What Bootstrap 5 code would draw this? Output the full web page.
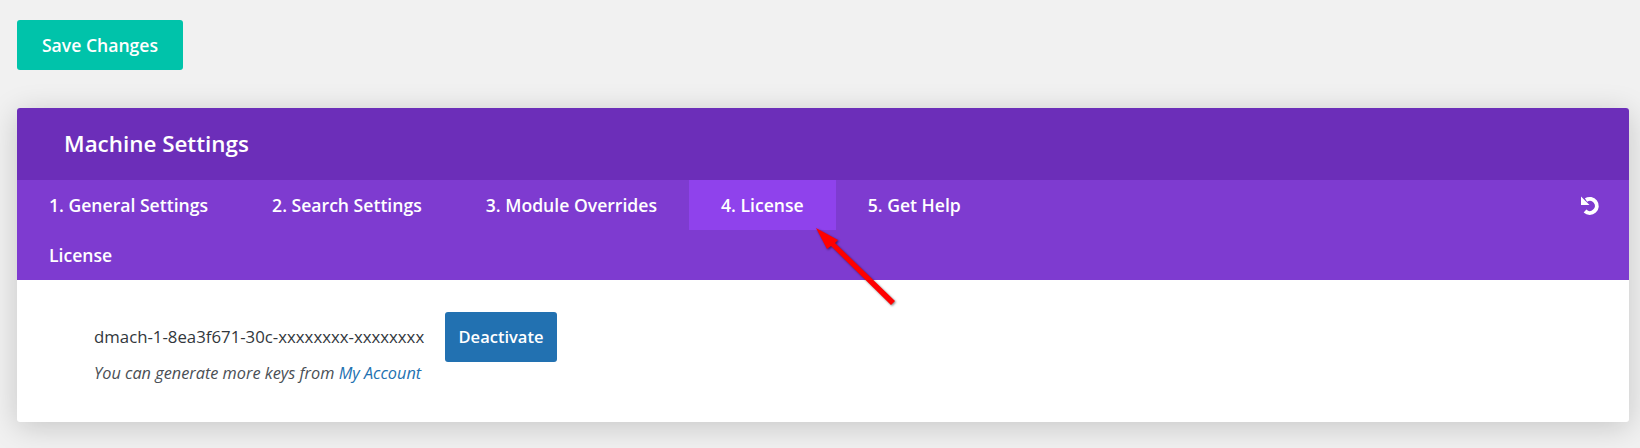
<!doctype html>
<html lang="en">
<head>
  <meta charset="utf-8">
  <meta name="viewport" content="width=device-width, initial-scale=1">
  <title>Machine Settings</title>
  <link href="https://cdn.jsdelivr.net/npm/bootstrap@5.3.0/dist/css/bootstrap.min.css" rel="stylesheet">
  <style>
    body {
      background: #f1f1f1;
      font-family: "Open Sans", sans-serif;
      color: #32373c;
      padding: 20px 11px 0 17px;
      min-height: 448px;
    }

    .save-btn {
      background: #00c3aa;
      color: #fff;
      font-size: 17.6px;
      font-weight: 600;
      height: 50px;
      width: 166px;
      border: 0;
      border-radius: 3px;
      padding: 0;
    }

    .save-btn:hover {
      background: #00c3aa;
      color: #fff;
    }

    .panel {
      margin-top: 38px;
      border-radius: 3px;
      box-shadow: 0 5px 30px rgba(0, 0, 0, 0.18);
      background: #fff;
      position: relative;
      height: 314px;
    }

    .panel-head {
      background: #6c2eb9;
      color: #fff;
      height: 72px;
      padding-left: 47px;
      font-size: 22.4px;
      font-weight: 600;
      border-radius: 3px 3px 0 0;
    }

    .tabs-bar {
      background: #7e3bd0;
      height: 100px;
    }

    .tab-row {
      height: 50px;
    }

    .tab-link {
      color: #fff;
      font-size: 17.6px;
      font-weight: 600;
      padding: 0 32px;
      height: 50px;
      text-decoration: none;
    }

    .tab-link:hover {
      color: #fff;
    }

    .tab-link.current {
      background: #8f42ec;
    }

    .reset-icon {
      width: 20px;
      height: 20px;
      margin-right: 29px;
    }

    .panel-body {
      padding: 32px 77px;
    }

    .key-text {
      font-size: 16.8px;
      width: 351px;
    }

    .deactivate-btn {
      background: #2271b1;
      color: #fff;
      font-size: 16.5px;
      font-weight: 600;
      width: 112px;
      height: 50px;
      border: 0;
      border-radius: 3px;
      padding: 0;
    }

    .key-note {
      font-size: 16.3px;
      font-style: italic;
      line-height: 22px;
      color: #4a4f55;
    }

    .key-note a {
      color: #2271b1;
      text-decoration: none;
    }

    .pointer-arrow {
      position: absolute;
      left: 789px;
      top: 110px;
      width: 100px;
      height: 100px;
      filter: drop-shadow(1px 1px 1px rgba(0, 0, 0, 0.5));
    }
  </style>
</head>

<body>
  <button class="btn save-btn d-block">Save Changes</button>

  <div class="panel">
    <div class="panel-head d-flex align-items-center">Machine Settings</div>

    <div class="tabs-bar">
      <div class="tab-row d-flex justify-content-between align-items-center">
        <div class="d-flex">
          <a href="#" class="tab-link d-flex align-items-center">1. General Settings</a>
          <a href="#" class="tab-link d-flex align-items-center">2. Search Settings</a>
          <a href="#" class="tab-link d-flex align-items-center">3. Module Overrides</a>
          <a href="#" class="tab-link current d-flex align-items-center">4. License</a>
          <a href="#" class="tab-link d-flex align-items-center">5. Get Help</a>
        </div>
        <svg class="reset-icon" viewBox="0 0 20 20" fill="none">
          <path d="M6 5 A7 7 0 1 1 5 16" stroke="#fff" stroke-width="4"/>
          <path d="M1 1.5 L1 10 L9.5 10 Z" fill="#fff"/>
        </svg>
      </div>
      <div class="tab-row d-flex">
        <a href="#" class="tab-link d-flex align-items-center">License</a>
      </div>
    </div>

    <div class="panel-body">
      <div class="d-flex align-items-center">
        <span class="key-text">dmach-1-8ea3f671-30c-xxxxxxxx-xxxxxxxx</span>
        <button class="btn deactivate-btn">Deactivate</button>
      </div>
      <div class="key-note">You can generate more keys from <a href="#">My Account</a></div>
    </div>

    <svg class="pointer-arrow" viewBox="0 0 100 100">
      <path d="M10 10 L32 22 L29 25 L89 83 L85 87 L25 28 L21 31 Z" fill="#f00"/>
    </svg>
  </div>

  <script src="https://cdn.jsdelivr.net/npm/bootstrap@5.3.0/dist/js/bootstrap.bundle.min.js"></script>
</body>
</html>
